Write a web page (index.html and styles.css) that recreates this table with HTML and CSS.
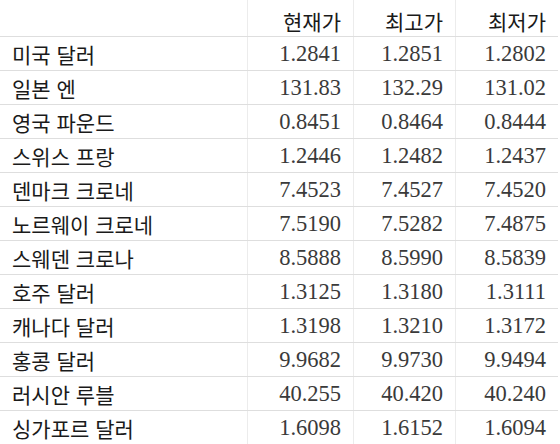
FILE: index.html
```html
<!DOCTYPE html>
<html lang="ko">
<head>
<meta charset="utf-8">
<link rel="stylesheet" href="styles.css">
</head>
<body>
<div class="table">
  <div class="row head">
    <div class="cell name"></div>
    <div class="cell num kr">현재가</div>
    <div class="cell num kr">최고가</div>
    <div class="cell num kr">최저가</div>
  </div>
  <div class="row"><div class="cell name">미국 달러</div><div class="cell num">1.2841</div><div class="cell num">1.2851</div><div class="cell num">1.2802</div></div>
  <div class="row"><div class="cell name">일본 엔</div><div class="cell num">131.83</div><div class="cell num">132.29</div><div class="cell num">131.02</div></div>
  <div class="row"><div class="cell name">영국 파운드</div><div class="cell num">0.8451</div><div class="cell num">0.8464</div><div class="cell num">0.8444</div></div>
  <div class="row"><div class="cell name">스위스 프랑</div><div class="cell num">1.2446</div><div class="cell num">1.2482</div><div class="cell num">1.2437</div></div>
  <div class="row"><div class="cell name">덴마크 크로네</div><div class="cell num">7.4523</div><div class="cell num">7.4527</div><div class="cell num">7.4520</div></div>
  <div class="row"><div class="cell name">노르웨이 크로네</div><div class="cell num">7.5190</div><div class="cell num">7.5282</div><div class="cell num">7.4875</div></div>
  <div class="row"><div class="cell name">스웨덴 크로나</div><div class="cell num">8.5888</div><div class="cell num">8.5990</div><div class="cell num">8.5839</div></div>
  <div class="row"><div class="cell name">호주 달러</div><div class="cell num">1.3125</div><div class="cell num">1.3180</div><div class="cell num">1.3111</div></div>
  <div class="row"><div class="cell name">캐나다 달러</div><div class="cell num">1.3198</div><div class="cell num">1.3210</div><div class="cell num">1.3172</div></div>
  <div class="row"><div class="cell name">홍콩 달러</div><div class="cell num">9.9682</div><div class="cell num">9.9730</div><div class="cell num">9.9494</div></div>
  <div class="row"><div class="cell name">러시안 루블</div><div class="cell num">40.255</div><div class="cell num">40.420</div><div class="cell num">40.240</div></div>
  <div class="row"><div class="cell name">싱가포르 달러</div><div class="cell num">1.6098</div><div class="cell num">1.6152</div><div class="cell num">1.6094</div></div>
</div>
</body>
</html>
```

FILE: styles.css
```css
html, body {
  margin: 0;
  padding: 0;
  background: #ffffff;
}

.table {
  width: 558px;
  display: flex;
  flex-direction: column;
  color: #1e1e1e;
}

.row {
  display: grid;
  grid-template-columns: 247px 106px 102px 103px;
  height: 34px;
  box-sizing: border-box;
  border-bottom: 1px solid #dedede;
}

.row.head {
  height: 37px;
  padding-top: 6px;
}

.cell {
  display: flex;
  align-items: center;
  box-sizing: border-box;
  white-space: nowrap;
}

.cell + .cell {
  border-left: 1px solid #ececec;
}

.name {
  padding-left: 12px;
  font-family: "Noto Sans CJK KR", "Noto Sans", sans-serif;
  font-size: 21px;
  color: #1a1a1a;
}

.num {
  justify-content: flex-end;
  padding-right: 12px;
  font-family: "Liberation Serif", "Times New Roman", serif;
  font-size: 22.5px;
  color: #3a3a3a;
}

.num.kr {
  font-family: "Noto Sans CJK KR", "Noto Sans", sans-serif;
  font-size: 21px;
  color: #1a1a1a;
}

.head .cell + .cell {
  margin-top: -6px;
  padding-top: 6px;
}
```
